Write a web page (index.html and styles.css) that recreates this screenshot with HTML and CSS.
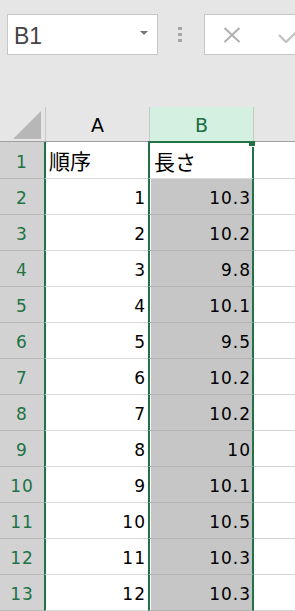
FILE: index.html
```html
<!DOCTYPE html>
<html lang="ja">
<head>
  <meta charset="UTF-8">
  <meta name="viewport" content="width=device-width, initial-scale=1.0">
  <title>Sheet</title>
  <link rel="stylesheet" href="styles.css">
</head>
<body>
  <div class="toolbar">
    <div class="namebox">
      <span class="name">B1</span>
      <span class="caret"></span>
    </div>
    <div class="grip"><i></i><i></i><i></i></div>
    <div class="fxbox">
      <svg class="icon-x" width="18" height="16" viewBox="0 0 18 16">
        <path d="M1.5 1 L16.5 15 M16.5 1 L1.5 15" stroke="#b0b0b0" stroke-width="2" fill="none"/>
      </svg>
      <svg class="icon-ok" width="24" height="16" viewBox="0 0 24 16">
        <path d="M1 8 L8 15 L23 0.5" stroke="#c4c4c4" stroke-width="2.4" fill="none"/>
      </svg>
    </div>
  </div>

  <div class="colheads">
    <div class="corner"><span class="tri"></span></div>
    <div class="colhead">A</div>
    <div class="colhead active">B</div>
    <div class="colrest"></div>
  </div>

  <div class="grid" id="grid"></div>

  <script>
    const rows = [
      ['順序', '長さ'],
      [1, 10.3], [2, 10.2], [3, 9.8], [4, 10.1], [5, 9.5], [6, 10.2],
      [7, 10.2], [8, 10], [9, 10.1], [10, 10.5], [11, 10.3], [12, 10.3]
    ];
    const grid = document.getElementById('grid');

    rows.forEach((row, i) => {
      const head = i === 0;
      grid.insertAdjacentHTML('beforeend', `
        <div class="rowhead">${i + 1}</div>
        <div class="cell a${head ? ' text' : ''}">${row[0]}</div>
        <div class="cell b${head ? ' text current' : ''}">${row[1]}${head ? '<span class="handle"></span>' : ''}</div>
        <div class="cell rest"></div>
      `);
    });
  </script>
</body>
</html>
```

FILE: styles.css
```css
body {
  margin: 0;
  background-color: #e6e6e6;
  font-family: "DejaVu Sans", "Noto Sans CJK JP", sans-serif;
  overflow: hidden;
}

/* formula bar */
.toolbar {
  display: flex;
  align-items: flex-start;
  height: 107px;
  padding: 14px 0 0 7px;
  box-sizing: border-box;
  overflow: hidden;
}
.namebox {
  flex-shrink: 0;
  display: flex;
  align-items: center;
  justify-content: space-between;
  width: 151px;
  height: 41px;
  padding: 0 9px 0 6px;
  box-sizing: border-box;
  background-color: #fff;
  border: 1px solid #c6c6c6;
}
.name {
  font-family: "Liberation Sans", sans-serif;
  font-size: 23px;
  color: #444;
  padding-top: 3px;
}
.caret {
  width: 0;
  height: 0;
  border-left: 4px solid transparent;
  border-right: 4px solid transparent;
  border-top: 4px solid #777;
  margin-top: -4px;
}
.grip {
  flex-shrink: 0;
  display: flex;
  flex-direction: column;
  gap: 3px;
  margin: 13px 0 0 20px;
}
.grip i {
  width: 4px;
  height: 3px;
  background-color: #a6a6a6;
}
.fxbox {
  flex-shrink: 0;
  display: flex;
  align-items: center;
  gap: 37px;
  width: 120px;
  height: 41px;
  margin-left: 22px;
  padding-left: 18px;
  box-sizing: border-box;
  background-color: #fff;
  border: 1px solid #c6c6c6;
}

/* column headers */
.colheads {
  display: grid;
  grid-template-columns: 46px 104px 104px 1fr;
  height: 35px;
  border-bottom: 1px solid #9f9f9f;
  box-sizing: border-box;
}
.corner,
.colhead {
  border-right: 1px solid #c8c8c8;
}
.corner {
  display: flex;
  justify-content: flex-end;
  align-items: flex-end;
  padding: 0 4px 2px 0;
}
.tri {
  width: 28px;
  height: 28px;
  background-color: #b7b7b7;
  clip-path: polygon(100% 0, 100% 100%, 0 100%);
}
.colhead {
  display: flex;
  align-items: center;
  justify-content: center;
  font-size: 19px;
  color: #000;
  padding-top: 2px;
}
.colhead.active {
  background-color: #d3f0e0;
  color: #1d6b40;
}

/* cells */
.grid {
  display: grid;
  grid-template-columns: 44px 104px 106px 1fr;
  grid-template-rows: 37px;
  grid-auto-rows: 36px;
}
.rowhead,
.cell {
  display: flex;
  align-items: center;
  box-sizing: border-box;
  font-size: 17px;
  letter-spacing: 1px;
  padding-top: 3px;
}
.rowhead {
  justify-content: center;
  background-color: #d2d2d2;
  border-bottom: 1px solid #b9b9b9;
  color: #217346;
}
.cell {
  justify-content: flex-end;
  background-color: #fff;
  color: #000;
  border-bottom: 1px solid #dadada;
}
.cell.a {
  border-left: 2px solid #217346;
  padding-right: 2px;
}
.cell.b {
  position: relative;
  border-left: 2px solid #217346;
  border-right: 2px solid #217346;
  padding-right: 1px;
  background-color: #c6c6c6;
  border-bottom-color: #b3b3b3;
  box-shadow: inset 1px 0 #fff;
}
.cell.rest {
  border-bottom-color: #d4d4d4;
}
.cell.text {
  justify-content: flex-start;
  font-size: 21px;
  letter-spacing: 0;
  padding: 0 0 0 3px;
}
.cell.b.current {
  background-color: #fff;
  border-top: 1px solid #217346;
  border-bottom-color: #dadada;
  box-shadow: 0 -1px 0 #217346;
  padding-left: 4px;
}
.handle {
  position: absolute;
  top: -2px;
  right: -3px;
  width: 6px;
  height: 5px;
  background-color: #217346;
  box-shadow: 0 1px 0 #fff;
}
```
